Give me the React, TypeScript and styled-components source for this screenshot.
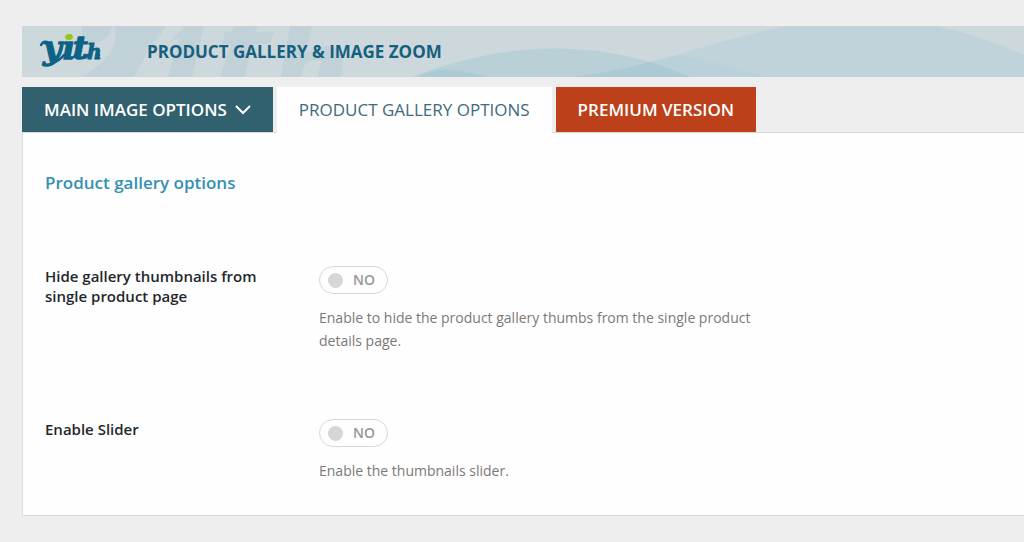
import React, { useId, useState } from "react";
import styled, { createGlobalStyle, css } from "styled-components";

const GlobalStyle = createGlobalStyle`
  *, *::before, *::after { box-sizing: border-box; }
  body {
    margin: 0;
    background: #eeeeee;
    color: #23282d;
    font-family: "Open Sans", "Noto Sans", sans-serif;
    overflow-x: hidden;
  }
`;

const Page = styled.div`
  padding: 26px 0 26px 22px;
`;

const Banner = styled.header`
  position: relative;
  display: flex;
  align-items: center;
  height: 51px;
  padding-left: 16px;
  background: #ccd8db;
  overflow: hidden;
`;

const BannerArt = styled.svg`
  position: absolute;
  top: 0;
  left: 0;
`;

const Logo = styled.svg`
  position: relative;
  flex: none;
  width: 64px;
  height: 51px;
  margin-right: 45px;
`;

const BannerTitle = styled.h1`
  position: relative;
  margin: 0;
  color: #155f80;
  font-size: 17px;
  line-height: 24px;
  font-weight: 700;
  text-transform: uppercase;
`;

const Tabs = styled.nav`
  display: flex;
  gap: 4px;
  margin-top: 10px;
`;

type TabKind = "menu" | "current" | "premium";

const tabColors: Record<TabKind, ReturnType<typeof css>> = {
  menu: css`background: #31606f; color: #ffffff;`,
  current: css`background: #fefefe; color: #3f6b7c; font-weight: 500; margin-bottom: -1px; padding-bottom: 1px;`,
  premium: css`background: #bc4019; color: #ffffff;`,
};

const Tab = styled.a<{ $kind: TabKind }>`
  position: relative;
  display: flex;
  align-items: center;
  gap: 8px;
  height: ${(p) => (p.$kind === "current" ? 46 : 45)}px;
  padding: 0 22px;
  font-size: 17px;
  line-height: 24px;
  font-weight: 600;
  text-decoration: none;
  text-transform: uppercase;
  white-space: nowrap;
  ${(p) => tabColors[p.$kind]}
`;

const Panel = styled.main`
  padding: 38px 22px 33px;
  background: #fefefe;
  border: 1px solid #dcdcdc;
  border-right: 0;
`;

const PanelTitle = styled.h2`
  margin: 0 0 71px;
  color: #3490b4;
  font-size: 17px;
  line-height: 24px;
  font-weight: 600;
`;

const Options = styled.div`
  display: grid;
  gap: 67px;
`;

const OptionRow = styled.div`
  display: grid;
  grid-template-columns: 234px minmax(0, 460px);
  column-gap: 40px;
`;

const OptionLabel = styled.label`
  font-size: 15px;
  line-height: 20px;
  font-weight: 600;
`;

const Switch = styled.span`
  position: relative;
  display: flex;
  align-items: center;
  gap: 10px;
  width: 69px;
  height: 28px;
  padding-left: 8px;
  border: 1px solid #d8d8d8;
  border-radius: 14px;
  color: #979797;
  font-size: 14px;
  line-height: 20px;
  font-weight: 600;
`;

const Knob = styled.span`
  width: 15px;
  height: 15px;
  border-radius: 50%;
  background: #d6d6d6;
`;

const SwitchInput = styled.input`
  position: absolute;
  inset: 0;
  width: 100%;
  height: 100%;
  margin: 0;
  opacity: 0;
  cursor: pointer;
`;

const Description = styled.p`
  margin: 12px 0 0;
  color: #7d7878;
  font-size: 14px;
  line-height: 23px;
`;

function YithLogo() {
  return (
    <Logo viewBox="0 0 64 51" role="img" aria-label="yith">
      <g
        fill="#0d6285"
        stroke="#0d6285"
        strokeWidth="1.4"
        strokeLinejoin="round"
        fontFamily="DejaVu Serif, serif"
        fontWeight="700"
        fontStyle="italic"
      >
        <text x="5 24 35" y="33" fontSize="32">yıt</text>
        <text x="49" y="33" fontSize="20" strokeWidth="1">h</text>
      </g>
      <path
        d="M3 19q2-4 6-3M15 37q6-2 11-8M33 32q3 0 5-4M45 32q3 0 5-3M58 32q2 0 3-3"
        fill="none"
        stroke="#0d6285"
        strokeWidth="2.4"
        strokeLinecap="round"
      />
      <ellipse cx="31" cy="11" rx="4" ry="3" fill="#97c41c" transform="rotate(-12 31 11)" />
    </Logo>
  );
}

function BannerBackground() {
  return (
    <BannerArt width="1002" height="51" viewBox="0 0 1002 51" aria-hidden="true">
      <g fill="#c0d1d8">
        <path d="M60 0H90Q88 9 82 14Q72 18 60 14ZM93 0H126C132 16 120 38 112 51H60C82 38 98 22 93 0Z" />
        <path d="M126 0H144Q136 14 128 18ZM163 0H182L170 51H146L158 12L148 16Z" />
        <path d="M212 0H236L233 6H252L248 18H230L223 51H198L209 18H200L203 6H210Z" />
        <path d="M268 0H290L284 28Q304 14 319 25Q324 31 318 51H296L299 35Q291 31 282 40L279 51H259Z" />
      </g>
      <path d="M551 51Q600 44 658 28Q715 10 765 0H915Q960 10 1002 29V51Z" fill="#c1d3da" />
      <path d="M390 51C485 13 585 13 668 51Z" fill="#bad0d7" />
      <path d="M658 29Q700 37 745 51H668Q648 42 628 36Z" fill="#bbd1d9" />
      <path d="M396 51Q418 36 465 51ZM551 51Q590 46 628 36Q648 42 668 51Z" fill="#abcad3" />
    </BannerArt>
  );
}

function Option({ title, description }: { title: string; description: string }) {
  const id = useId();
  const [on, setOn] = useState(false);
  return (
    <OptionRow>
      <OptionLabel htmlFor={id}>{title}</OptionLabel>
      <div>
        <Switch>
          <Knob />
          {on ? "YES" : "NO"}
          <SwitchInput id={id} type="checkbox" checked={on} onChange={(e) => setOn(e.target.checked)} />
        </Switch>
        <Description>{description}</Description>
      </div>
    </OptionRow>
  );
}

export default function App() {
  return (
    <>
      <GlobalStyle />
      <Page>
        <Banner>
          <BannerBackground />
          <YithLogo />
          <BannerTitle>Product Gallery &amp; Image Zoom</BannerTitle>
        </Banner>
        <Tabs>
          <Tab href="#main-image" $kind="menu">
            Main image options
            <svg width="16" height="10" viewBox="0 0 16 10" fill="none" stroke="currentColor" strokeWidth="2" aria-hidden="true">
              <path d="M1 1 8 8 15 1" />
            </svg>
          </Tab>
          <Tab href="#gallery" $kind="current" aria-current="page">Product gallery options</Tab>
          <Tab href="#premium" $kind="premium">Premium version</Tab>
        </Tabs>
        <Panel>
          <PanelTitle>Product gallery options</PanelTitle>
          <Options>
            <Option
              title="Hide gallery thumbnails from single product page"
              description="Enable to hide the product gallery thumbs from the single product details page."
            />
            <Option title="Enable Slider" description="Enable the thumbnails slider." />
          </Options>
        </Panel>
      </Page>
    </>
  );
}
